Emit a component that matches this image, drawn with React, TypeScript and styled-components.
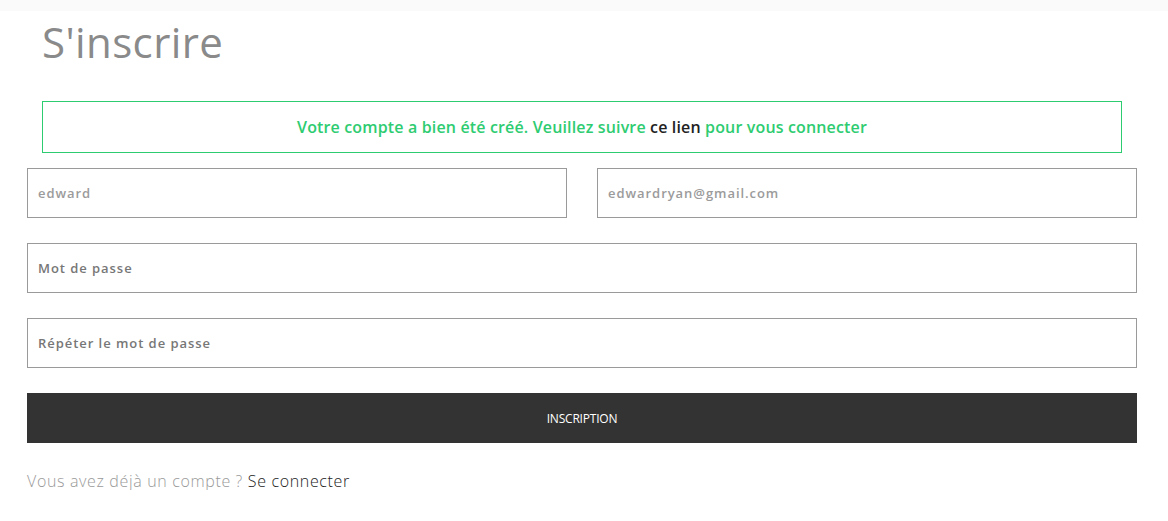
import styled, { createGlobalStyle } from 'styled-components'

const GlobalStyle = createGlobalStyle`
  body {
    margin: 0;
    background: #fff;
    font-family: 'Open Sans', 'Noto Sans', sans-serif;
  }
`

export default function App() {
  return (
    <>
      <GlobalStyle />
      <TopBand />
      <Container>
        <Title>S'inscrire</Title>
        <Alert>
          Votre compte a bien été créé. Veuillez suivre <AlertLink href="#">ce lien</AlertLink> pour vous
          connecter
        </Alert>
        <Form onSubmit={(e) => e.preventDefault()}>
          <TwoCols>
            <Field type="text" defaultValue="edward" $tone="light" />
            <Field type="email" defaultValue="edwardryan@gmail.com" $tone="light" />
          </TwoCols>
          <Field type="password" placeholder="Mot de passe" $tone="dark" />
          <Field type="password" placeholder="Répéter le mot de passe" $tone="dark" />
          <SubmitButton type="submit">INSCRIPTION</SubmitButton>
        </Form>
        <Footer>
          Vous avez déjà un compte ? <FooterLink href="#">Se connecter</FooterLink>
        </Footer>
      </Container>
    </>
  )
}

const TopBand = styled.div`
  height: 11px;
  background: #fafafa;
`

const Container = styled.main`
  padding: 0 31px 0 27px;
`

const Title = styled.h1`
  margin: 7px 15px 0;
  font-size: 42px;
  line-height: 48px;
  font-weight: 400;
  letter-spacing: 0.4px;
  color: #8a8a8a;
`

const Alert = styled.div`
  margin: 35px 15px 0;
  height: 52px;
  box-sizing: border-box;
  border: 1px solid #2ecc71;
  display: flex;
  align-items: center;
  justify-content: center;
  white-space: pre;
  font-size: 16px;
  font-weight: 600;
  letter-spacing: 0.15px;
  color: #2ecc71;
`

const AlertLink = styled.a`
  color: #222;
  text-decoration: none;
`

const Form = styled.form`
  margin-top: 15px;
  display: flex;
  flex-direction: column;
  gap: 25px;
`

const TwoCols = styled.div`
  display: grid;
  grid-template-columns: 1fr 1fr;
  gap: 30px;
`

const Field = styled.input<{ $tone: 'light' | 'dark' }>`
  height: 50px;
  box-sizing: border-box;
  width: 100%;
  border: 1px solid #9a9a9a;
  padding: 0 10px;
  font-family: 'Open Sans', 'Noto Sans', sans-serif;
  font-size: 13px;
  font-weight: 600;
  letter-spacing: 0.95px;
  color: ${({ $tone }) => ($tone === 'light' ? '#9b9b9b' : '#777')};
  outline: none;
  border-radius: 0;

  &::placeholder {
    color: ${({ $tone }) => ($tone === 'light' ? '#9b9b9b' : '#777')};
    opacity: 1;
  }
`

const SubmitButton = styled.button`
  height: 50px;
  border: none;
  border-radius: 0;
  background: #333;
  color: #fff;
  font-family: 'Open Sans', 'Noto Sans', sans-serif;
  font-size: 12px;
  font-weight: 500;
  letter-spacing: -0.2px;
  cursor: pointer;
`

const Footer = styled.p`
  margin: 29px 0 0;
  font-size: 16px;
  font-weight: 300;
  line-height: 18px;
  letter-spacing: 0.65px;
  color: #999;
`

const FooterLink = styled.a`
  color: #222;
  text-decoration: none;
`
